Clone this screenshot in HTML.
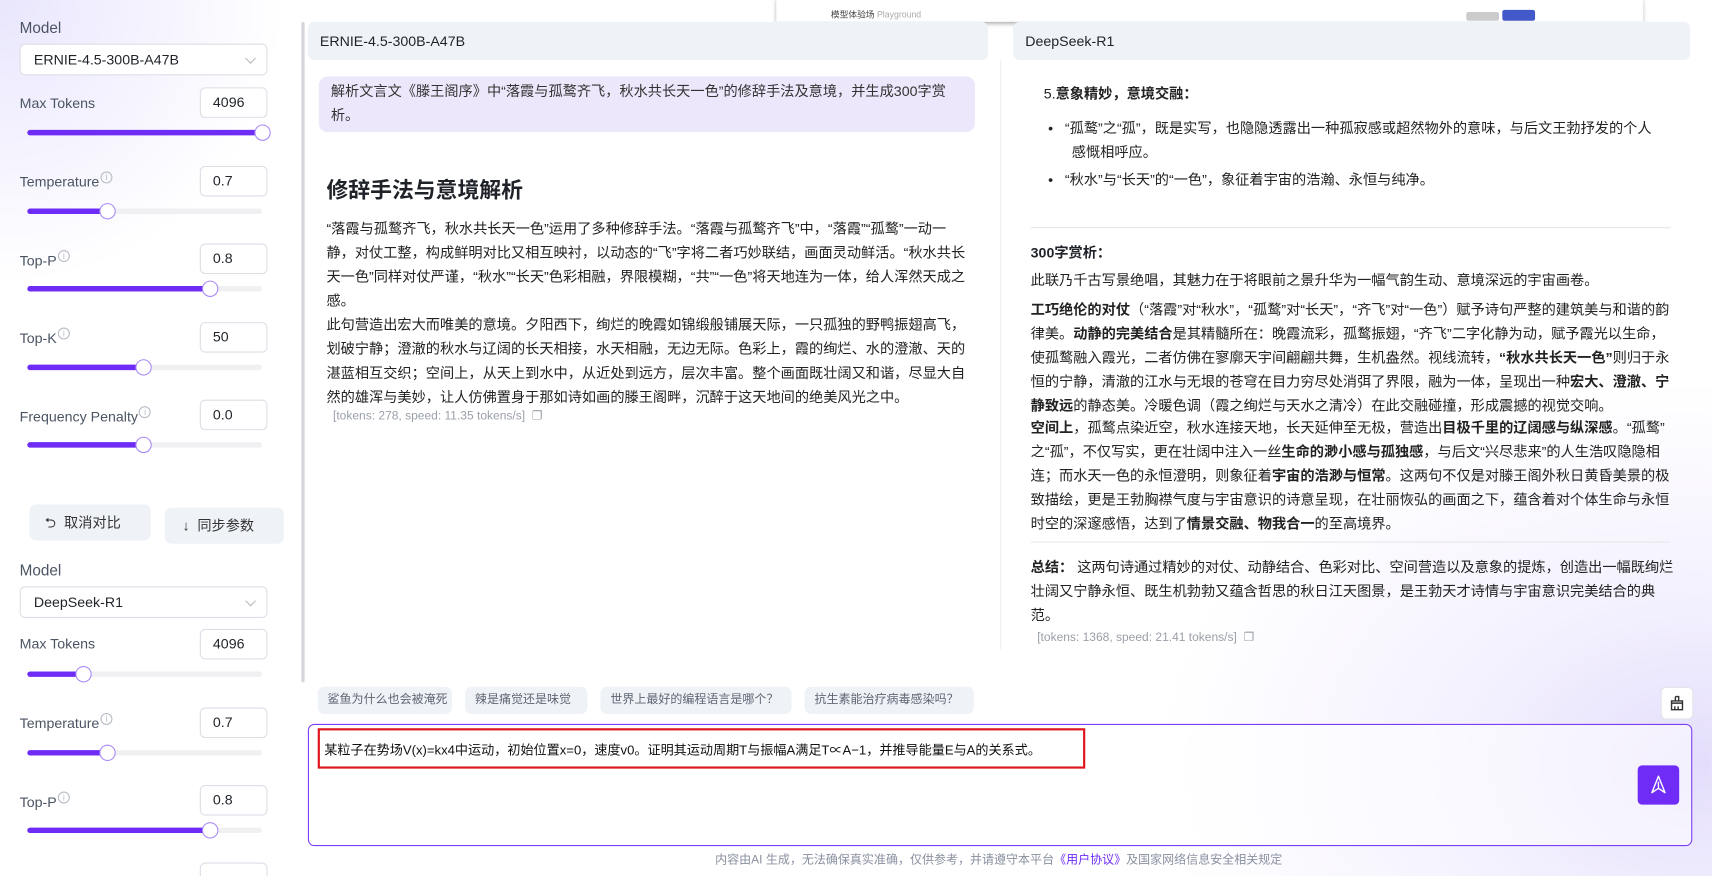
<!DOCTYPE html>
<html><head><meta charset="utf-8"><style>
*{box-sizing:border-box;margin:0;padding:0}
html,body{width:1712px;height:876px;overflow:hidden}
body{position:relative;font-family:"Liberation Sans","Noto Sans CJK SC",sans-serif;color:#1f2329;background:#fff}
#w{position:absolute;left:0;top:0;width:1568px;height:803px;transform:scale(1.0918);transform-origin:0 0;
background:radial-gradient(ellipse 500px 350px at 1560px 700px,#e4defc 0%,rgba(236,232,253,0.6) 45%,rgba(255,255,255,0) 100%),radial-gradient(ellipse 260px 260px at 0px 0px,#e9e6fd 0%,rgba(255,255,255,0) 100%),#fff}
.a{position:absolute;white-space:nowrap}
.lbl{font-size:13px;color:#4b5563}
.lbl i{display:inline-block;width:11px;height:11px;border:1px solid #b7bcc6;border-radius:50%;font-size:8px;color:#b7bcc6;text-align:center;line-height:9px;font-style:normal;vertical-align:6px;margin-left:1px}
.inp{position:absolute;width:62px;height:28px;border:1px solid #dcdfe6;border-radius:5px;background:#fff;font-size:13px;padding-left:11px;line-height:26px}
.sel{position:absolute;left:18px;width:227px;height:29px;border:1px solid #dcdfe6;border-radius:5px;background:#fff;font-size:13px;padding-left:12px;line-height:27px}
.sel:after{content:"";position:absolute;right:11px;top:9px;width:6px;height:6px;border-right:1px solid #bbb;border-bottom:1px solid #bbb;transform:rotate(45deg)}
.trk{position:absolute;left:25px;width:215px;height:5px;border-radius:3px;background:#f0f0f3}
.trk b{position:absolute;left:0;top:0;height:5px;border-radius:3px;background:#6e2cf6}
.trk s{position:absolute;top:-5px;width:15px;height:15px;border-radius:50%;border:1.5px solid #a98af5;background:#fff;margin-left:-7px}
.hd{position:absolute;top:20px;height:35px;background:#eff2f7;border-radius:6px;font-size:13px;padding-left:11px;line-height:35px}
.t{font-size:13px;line-height:22px}
.chip{position:absolute;top:629px;height:25px;background:#eff2f7;border-radius:6px;font-size:11px;color:#5f6673;line-height:25px;padding-left:9px;white-space:nowrap;overflow:hidden}
</style></head><body><div id="w">
<div class="a lbl" style="left:18px;top:17px;font-size:14px">Model</div>
<div class="sel" style="top:40px">ERNIE-4.5-300B-A47B</div>
<div class="a lbl" style="left:18px;top:87px">Max Tokens</div><div class="inp" style="left:183px;top:80px">4096</div>
<div class="trk" style="top:119px"><b style="width:215px"></b><s style="left:215px"></s></div>
<div class="a lbl" style="left:18px;top:157px">Temperature<i>i</i></div><div class="inp" style="left:183px;top:152px">0.7</div>
<div class="trk" style="top:191px"><b style="width:73px"></b><s style="left:73px"></s></div>
<div class="a lbl" style="left:18px;top:229px">Top-P<i>i</i></div><div class="inp" style="left:183px;top:223px">0.8</div>
<div class="trk" style="top:262px"><b style="width:167px"></b><s style="left:167px"></s></div>
<div class="a lbl" style="left:18px;top:300px">Top-K<i>i</i></div><div class="inp" style="left:183px;top:295px">50</div>
<div class="trk" style="top:334px"><b style="width:106px"></b><s style="left:106px"></s></div>
<div class="a lbl" style="left:18px;top:372px">Frequency Penalty<i>i</i></div><div class="inp" style="left:183px;top:366px">0.0</div>
<div class="trk" style="top:405px"><b style="width:106px"></b><s style="left:106px"></s></div>
<div class="a" style="left:27px;top:462px;width:111px;height:33px;background:#eff2f7;border-radius:6px;font-size:13px;color:#333;line-height:33px;padding-left:14px">⮌&nbsp; 取消对比</div>
<div class="a" style="left:151px;top:465px;width:109px;height:33px;background:#eff2f7;border-radius:6px;font-size:13px;color:#333;line-height:33px;padding-left:16px">↓&nbsp; 同步参数</div>
<div class="a lbl" style="left:18px;top:514px;font-size:14px">Model</div>
<div class="sel" style="top:537px">DeepSeek-R1</div>
<div class="a lbl" style="left:18px;top:582px">Max Tokens</div><div class="inp" style="left:183px;top:576px">4096</div>
<div class="trk" style="top:615px"><b style="width:51px"></b><s style="left:51px"></s></div>
<div class="a lbl" style="left:18px;top:653px">Temperature<i>i</i></div><div class="inp" style="left:183px;top:648px">0.7</div>
<div class="trk" style="top:687px"><b style="width:73px"></b><s style="left:73px"></s></div>
<div class="a lbl" style="left:18px;top:725px">Top-P<i>i</i></div><div class="inp" style="left:183px;top:719px">0.8</div>
<div class="trk" style="top:758px"><b style="width:167px"></b><s style="left:167px"></s></div>
<div class="inp" style="left:183px;top:790px"></div>
<div class="a" style="left:276px;top:20px;width:3px;height:605px;background:#d5d7dc;border-radius:2px"></div>

<div class="a" style="left:711px;top:-2px;width:794px;height:22px;background:#fff;box-shadow:0 2px 4px rgba(0,0,0,.35)">
<span class="a" style="left:50px;top:10px;font-size:8px;color:#444">模型体验场 <span style="color:#aaa">Playground</span></span>
<span class="a" style="left:632px;top:13px;width:30px;height:8px;background:#ccc;border-radius:2px"></span>
<span class="a" style="left:665px;top:11px;width:30px;height:10px;background:#4459c9;border-radius:2px"></span>
</div>

<div class="hd" style="left:282px;width:623px">ERNIE-4.5-300B-A47B</div>
<div class="hd" style="left:928px;width:620px">DeepSeek-R1</div>
<div class="a" style="left:916px;top:55px;width:1px;height:540px;background:#f0f1f3"></div>

<div class="a t" style="left:292px;top:70px;width:601px;height:51px;background:#ede7fb;border-radius:8px;padding:3px 11px;white-space:normal;color:#333">解析文言文《滕王阁序》中“落霞与孤鹜齐飞，秋水共长天一色”的修辞手法及意境，并生成300字赏<br>析。</div>
<div class="a" style="left:299px;top:158px;font-size:20px;font-weight:bold">修辞手法与意境解析</div>
<div class="a t" style="left:299px;top:199px;color:#222">“落霞与孤鹜齐飞，秋水共长天一色”运用了多种修辞手法。“落霞与孤鹜齐飞”中，“落霞”“孤鹜”一动一<br>静，对仗工整，构成鲜明对比又相互映衬，以动态的“飞”字将二者巧妙联结，画面灵动鲜活。“秋水共长<br>天一色”同样对仗严谨，“秋水”“长天”色彩相融，界限模糊，“共”“一色”将天地连为一体，给人浑然天成之<br>感。</div>
<div class="a t" style="left:299px;top:287px;color:#222">此句营造出宏大而唯美的意境。夕阳西下，绚烂的晚霞如锦缎般铺展天际，一只孤独的野鸭振翅高飞，<br>划破宁静；澄澈的秋水与辽阔的长天相接，水天相融，无边无际。色彩上，霞的绚烂、水的澄澈、天的<br>湛蓝相互交织；空间上，从天上到水中，从近处到远方，层次丰富。整个画面既壮阔又和谐，尽显大自<br>然的雄浑与美妙，让人仿佛置身于那如诗如画的滕王阁畔，沉醉于这天地间的绝美风光之中。</div>
<div class="a" style="left:305px;top:374px;font-size:11px;color:#9aa0a8">[tokens: 278, speed: 11.35 tokens/s] &nbsp;❐</div>

<div class="a t" style="left:956px;top:75px;color:#222">5.<b>意象精妙，意境交融：</b></div>
<div class="a t" style="left:960px;top:107px;color:#222">•&nbsp;&nbsp;&nbsp;“孤鹜”之“孤”，既是实写，也隐隐透露出一种孤寂感或超然物外的意味，与后文王勃抒发的个人<br>&nbsp;&nbsp;&nbsp;&nbsp;&nbsp;&nbsp;感慨相呼应。</div>
<div class="a t" style="left:960px;top:154px;color:#222">•&nbsp;&nbsp;&nbsp;“秋水”与“长天”的“一色”，象征着宇宙的浩瀚、永恒与纯净。</div>
<div class="a" style="left:944px;top:208px;width:586px;height:1px;background:#e5e7eb"></div>
<div class="a t" style="left:944px;top:221px;font-weight:bold">300字赏析：</div>
<div class="a t" style="left:944px;top:246px;color:#222">此联乃千古写景绝唱，其魅力在于将眼前之景升华为一幅气韵生动、意境深远的宇宙画卷。</div>
<div class="a t" style="left:944px;top:273px;color:#222"><b>工巧绝伦的对仗</b>（“落霞”对“秋水”，“孤鹜”对“长天”，“齐飞”对“一色”）赋予诗句严整的建筑美与和谐的韵<br>律美。<b>动静的完美结合</b>是其精髓所在：晚霞流彩，孤鹜振翅，“齐飞”二字化静为动，赋予霞光以生命，<br>使孤鹜融入霞光，二者仿佛在寥廓天宇间翩翩共舞，生机盎然。视线流转，<b>“秋水共长天一色”</b>则归于永<br>恒的宁静，清澈的江水与无垠的苍穹在目力穷尽处消弭了界限，融为一体，呈现出一种<b>宏大、澄澈、宁<br>静致远</b>的静态美。冷暖色调（霞之绚烂与天水之清冷）在此交融碰撞，形成震撼的视觉交响。</div>
<div class="a t" style="left:944px;top:381px;color:#222"><b>空间上</b>，孤鹜点染近空，秋水连接天地，长天延伸至无极，营造出<b>目极千里的辽阔感与纵深感</b>。“孤鹜”<br>之“孤”，不仅写实，更在壮阔中注入一丝<b>生命的渺小感与孤独感</b>，与后文“兴尽悲来”的人生浩叹隐隐相<br>连；而水天一色的永恒澄明，则象征着<b>宇宙的浩渺与恒常</b>。这两句不仅是对滕王阁外秋日黄昏美景的极<br>致描绘，更是王勃胸襟气度与宇宙意识的诗意呈现，在壮丽恢弘的画面之下，蕴含着对个体生命与永恒<br>时空的深邃感悟，达到了<b>情景交融、物我合一</b>的至高境界。</div>
<div class="a" style="left:944px;top:496px;width:586px;height:1px;background:#e5e7eb"></div>
<div class="a t" style="left:944px;top:509px;color:#222"><b>总结：</b> 这两句诗通过精妙的对仗、动静结合、色彩对比、空间营造以及意象的提炼，创造出一幅既绚烂<br>壮阔又宁静永恒、既生机勃勃又蕴含哲思的秋日江天图景，是王勃天才诗情与宇宙意识完美结合的典<br>范。</div>
<div class="a" style="left:950px;top:577px;font-size:11px;color:#9aa0a8">[tokens: 1368, speed: 21.41 tokens/s] &nbsp;❐</div>

<div class="chip" style="left:291px;width:123px">鲨鱼为什么也会被淹死</div>
<div class="chip" style="left:426px;width:112px">辣是痛觉还是味觉</div>
<div class="chip" style="left:550px;width:175px">世界上最好的编程语言是哪个？</div>
<div class="chip" style="left:737px;width:155px">抗生素能治疗病毒感染吗？</div>
<div class="a" style="left:1521px;top:629px;width:30px;height:30px;background:#fff;border:1px solid #e3e3e8;border-radius:5px">
<svg width="28" height="28" viewBox="0 0 28 28" style="position:absolute;left:0;top:0"><path d="M12.5 8h3v4M12.5 8v4M9 12h10v2H9zM9 14v6h10v-6M12 20v-3M15 20v-3" fill="none" stroke="#333" stroke-width="1.3"/></svg></div>

<div class="a" style="left:282px;top:663px;width:1268px;height:112px;border:1px solid #7b3ff2;border-radius:6px;background:rgba(255,255,255,0.55)"></div>
<div class="a" style="left:291px;top:667px;width:703px;height:37px;border:2px solid #e0161d"></div>
<div class="a" style="left:297px;top:678px;font-size:12px;color:#111">某粒子在势场V(x)=kx4中运动，初始位置x=0，速度v0。证明其运动周期T与振幅A满足T∝A−1，并推导能量E与A的关系式。</div>
<div class="a" style="left:1500px;top:701px;width:38px;height:36px;background:#6e2cf6;border-radius:4px">
<svg width="38" height="36" viewBox="0 0 38 36"><path d="M19 10L13 25L19 21L25 25Z M19 15V22" fill="none" stroke="#fff" stroke-width="1.3" stroke-linejoin="round"/></svg></div>
<div class="a" style="left:655px;top:779px;font-size:11px;color:#8a90a0">内容由AI 生成，无法确保真实准确，仅供参考，并请遵守本平台<span style="color:#6e2cf6">《用户协议》</span>及国家网络信息安全相关规定</div>
</div></body></html>
